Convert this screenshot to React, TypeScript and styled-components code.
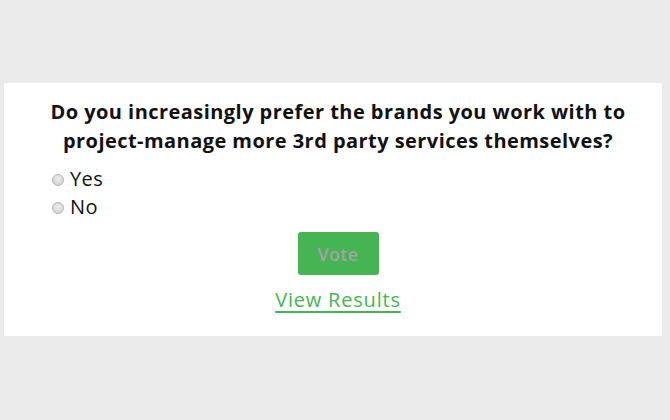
import React from "react";
import styled, { createGlobalStyle } from "styled-components";

const Global = createGlobalStyle`
  html, body { margin: 0; padding: 0; background: #ebebeb; }
  body { width: 670px; height: 420px; overflow: hidden; }
`;

const Page = styled.div`
  padding: 83px 8px 0 4px;
`;

const Card = styled.div`
  background: #ffffff;
  height: 253px;
  box-sizing: border-box;
  padding: 14px 10px 0 20px;
  display: flex;
  flex-direction: column;
`;

const Question = styled.h2`
  margin: 0;
  font-family: "Open Sans", "DejaVu Sans", sans-serif;
  font-weight: 700;
  font-size: 20px;
  letter-spacing: 0.45px;
  line-height: 29px;
  color: #111;
  text-align: center;
  white-space: nowrap;
`;

const Options = styled.div`
  display: flex;
  flex-direction: column;
  margin-top: 9px;
  padding-left: 28px;
`;

const Option = styled.label`
  display: flex;
  align-items: center;
  gap: 6px;
  height: 28px;
  font-family: "Open Sans", sans-serif;
  font-size: 20px;
  letter-spacing: 0.4px;
  color: #111;
`;

const Radio = styled.span`
  width: 10px;
  height: 10px;
  border-radius: 50%;
  border: 1px solid #b4b4b4;
  background: radial-gradient(circle at 50% 40%, #ececec, #cfcfcf);
  margin-top: 4px;
  flex: none;
`;

const Actions = styled.div`
  display: flex;
  flex-direction: column;
  align-items: center;
  margin-top: 12px;
  gap: 14px;
`;

const VoteButton = styled.button`
  width: 81px;
  height: 43px;
  border: none;
  border-radius: 3px;
  background: #45b554;
  color: #a3a3a3;
  font-family: "Open Sans", sans-serif;
  font-weight: 600;
  font-size: 18px;
  letter-spacing: 0.3px;
  padding: 0;
`;

const ResultsLink = styled.a`
  font-family: "Open Sans", sans-serif;
  font-size: 20px;
  letter-spacing: 0.8px;
  color: #45b554;
  text-decoration: underline;
  text-decoration-thickness: 2px;
  text-underline-offset: 4px;
  line-height: 22px;
`;

export default function App() {
  return (
    <>
      <Global />
      <Page>
        <Card>
          <Question>
            Do you increasingly prefer the brands you work with to
            <br />
            project-manage more 3rd party services themselves?
          </Question>
          <Options>
            <Option>
              <Radio />
              Yes
            </Option>
            <Option>
              <Radio />
              No
            </Option>
          </Options>
          <Actions>
            <VoteButton>Vote</VoteButton>
            <ResultsLink href="#">View Results</ResultsLink>
          </Actions>
        </Card>
      </Page>
    </>
  );
}
